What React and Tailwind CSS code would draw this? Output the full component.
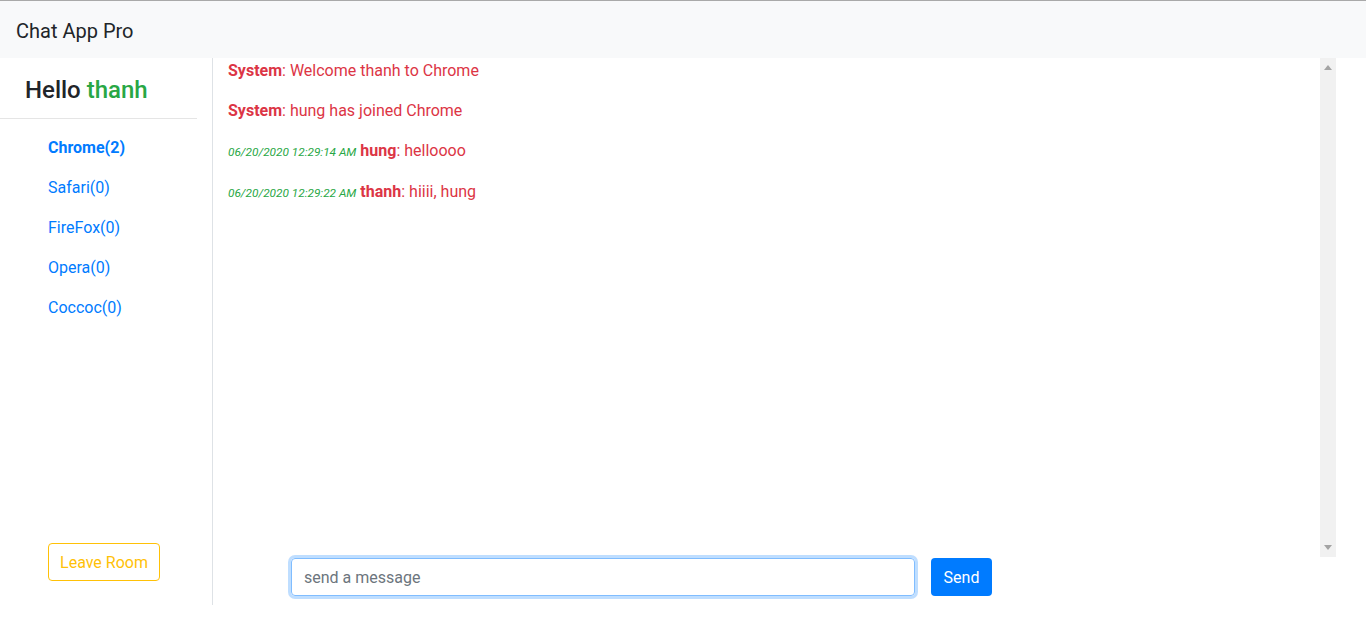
const rooms = [
  { name: 'Chrome', count: 2, active: true },
  { name: 'Safari', count: 0 },
  { name: 'FireFox', count: 0 },
  { name: 'Opera', count: 0 },
  { name: 'Coccoc', count: 0 },
];

const messages = [
  { user: 'System', text: 'Welcome thanh to Chrome' },
  { user: 'System', text: 'hung has joined Chrome' },
  { time: '06/20/2020 12:29:14 AM', user: 'hung', text: 'helloooo' },
  { time: '06/20/2020 12:29:22 AM', user: 'thanh', text: 'hiiii, hung' },
];

export default function App() {
  return (
    <div className="w-full h-[625px] bg-white text-[#212529] text-base font-['Roboto','Liberation_Sans',sans-serif]">
      {/* Navbar */}
      <nav className="h-[58px] bg-[#f8f9fa] border-t border-[#a9a9a9] flex items-center px-4 pt-[2px]">
        <span className="text-[20px] leading-[30px]">Chat App Pro</span>
      </nav>

      <div className="flex h-[547px]">
        {/* Sidebar */}
        <aside className="w-[213px] border-r border-[#dee2e6] flex flex-col">
          <h4 className="pt-[18px] pl-[25px] text-[24px] leading-[29px] font-medium">
            Hello <span className="text-[#28a745]">thanh</span>
          </h4>
          <hr className="w-[197px] mt-[13px] mb-[9px] border-0 border-t border-[#e5e5e5]" />
          <ul className="pl-8 flex flex-col">
            {rooms.map((r) => (
              <li key={r.name}>
                <a
                  className={`block px-4 py-2 leading-6 text-[#007bff] ${r.active ? 'font-bold' : ''}`}
                  href="#"
                >
                  {r.name}({r.count})
                </a>
              </li>
            ))}
          </ul>
          <div className="mt-auto pl-12 pb-[24px]">
            <button className="h-[38px] w-[112px] pt-px border border-[#ffc107] rounded text-[#ffc107] leading-6">
              Leave Room
            </button>
          </div>
        </aside>

        {/* Chat */}
        <section className="flex-1 flex flex-col">
          <div className="h-[499px] flex">
            <div className="flex-1 pl-[15px] pt-px">
              {messages.map((m, i) => (
                <p key={i} className="mb-4 leading-6 text-[#dc3545]">
                  {m.time && (
                    <i className="text-[11.8px] text-[#28a745] mr-1">{m.time}</i>
                  )}
                  <b>{m.user}</b>: {m.text}
                </p>
              ))}
            </div>
            {/* scrollbar track */}
            <div className="w-4 mr-[30px] bg-[#f1f1f1] flex flex-col items-center justify-between py-[7px]">
              <svg width="8" height="5" viewBox="0 0 8 5"><path d="M0 5 L4 0 L8 5 Z" fill="#a3a3a3" /></svg>
              <svg width="8" height="5" viewBox="0 0 8 5"><path d="M0 0 L4 5 L8 0 Z" fill="#a3a3a3" /></svg>
            </div>
          </div>
          <form className="flex gap-4 pl-[78px] pt-px" onSubmit={(e) => e.preventDefault()}>
            <input
              className="w-[624px] h-[38px] px-3 pt-px border border-[#80bdff] rounded outline-none shadow-[0_0_0_3px_rgba(0,123,255,0.25)] placeholder:text-[#6c757d] text-base"
              placeholder="send a message"
              type="text"
            />
            <button className="h-[38px] w-[61px] pt-px bg-[#007bff] text-white rounded leading-6">
              Send
            </button>
          </form>
        </section>
      </div>
    </div>
  );
}
